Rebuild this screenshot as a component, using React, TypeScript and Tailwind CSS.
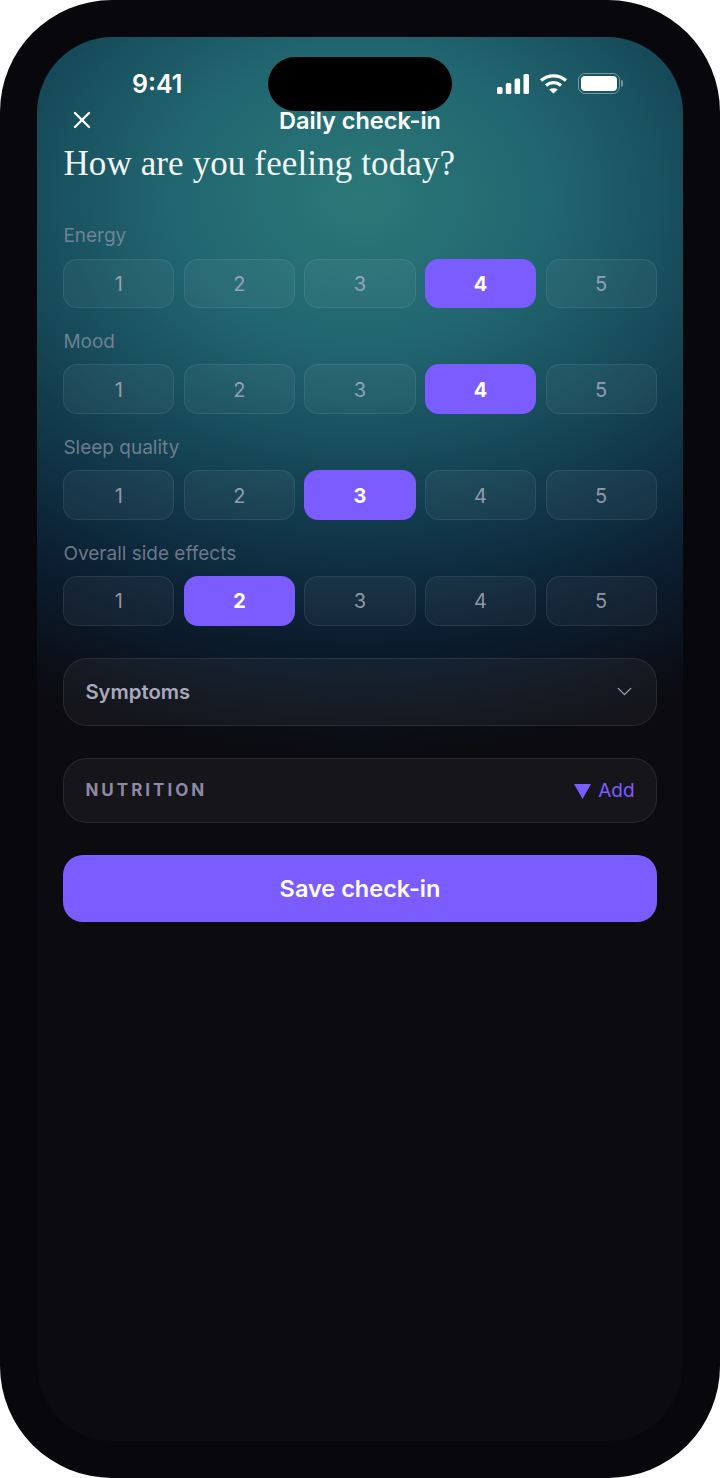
import React from 'react'
import { ChevronDown, X } from 'lucide-react'

type Scale = { label: string; active: number }

const SCALES: Scale[] = [
  { label: 'Energy', active: 4 },
  { label: 'Mood', active: 4 },
  { label: 'Sleep quality', active: 3 },
  { label: 'Overall side effects', active: 2 },
]

function StatusIcons() {
  return (
    <div className="flex items-center gap-[10px]">
      {/* signal */}
      <svg width="32" height="20" viewBox="0 0 32 20" fill="white">
        <rect x="0" y="13" width="5.5" height="7" rx="1.5" />
        <rect x="8.8" y="9" width="5.5" height="11" rx="1.5" />
        <rect x="17.6" y="4.5" width="5.5" height="15.5" rx="1.5" />
        <rect x="26.5" y="0" width="5.5" height="20" rx="1.5" />
      </svg>
      {/* wifi */}
      <svg width="29" height="21" viewBox="0 0 29 21" fill="none" stroke="white" strokeWidth="3.2">
        <path d="M2 7.5C9 1.2 20 1.2 27 7.5" />
        <path d="M7 12.5C11.5 8.7 17.5 8.7 22 12.5" />
        <path d="M14.5 20.5L10.2 16.6C12.8 14.7 16.2 14.7 18.8 16.6Z" fill="white" stroke="none" />
      </svg>
      {/* battery */}
      <div className="flex items-center gap-[1px]">
        <div className="w-[42px] h-[21px] rounded-[7px] border border-white/40 p-[2px]">
          <div className="w-full h-full rounded-[4px] bg-white" />
        </div>
        <div className="w-[2px] h-[7px] rounded-r-full bg-white/40" />
      </div>
    </div>
  )
}

function ScaleRow({ label, active }: Scale) {
  return (
    <div>
      <div className="h-[24px] text-[19px] leading-[26px] text-[#8d93a3]/75">{label}</div>
      <div className="mt-[11.5px] grid grid-cols-5 gap-[9.5px]">
        {[1, 2, 3, 4, 5].map((n) =>
          n === active ? (
            <button
              key={n}
              className="h-[49.5px] rounded-[14px] bg-[#7b5cff] pt-[1px] text-[20px] font-bold text-white"
            >
              {n}
            </button>
          ) : (
            <button
              key={n}
              className="h-[49.5px] rounded-[14px] border border-white/[0.08] bg-white/[0.045] pt-[1px] text-[20px] text-[#b0b4c4]/80"
            >
              {n}
            </button>
          )
        )}
      </div>
    </div>
  )
}

export default function App() {
  return (
    <div className="w-[720px] h-[1478px] bg-white font-['Inter',sans-serif]">
      <div className="h-full rounded-[112px] bg-[#08080c] p-[37px]">
        <div className="relative h-full overflow-hidden rounded-[76px] bg-[#0b0b10] bg-[radial-gradient(ellipse_720px_560px_at_323px_160px,#2b7878_0%,#216670_26%,#174c5b_46%,#103448_62%,#0b1e30_78%,#0b0f18_94%,#0b0b10_100%)]">
          {/* camera island */}
          <div className="absolute left-[231px] top-[20px] w-[184px] h-[54px] rounded-full bg-black" />

          {/* status bar */}
          <div className="flex h-[63px] items-end justify-between pl-[95px] pr-[60px]">
            <span className="text-[25px] leading-[32px] font-semibold text-white">9:41</span>
            <div className="pb-[6px]">
              <StatusIcons />
            </div>
          </div>

          {/* nav */}
          <div className="relative flex h-[40px] items-center justify-center pt-[1px]">
            <X className="absolute left-[30.5px] top-[6px] text-white" size={28} strokeWidth={2} />
            <span className="text-[23.5px] font-semibold text-white">Daily check-in</span>
          </div>

          <div className="px-[26.4px]">
            <h1 className="h-[48px] font-['Liberation_Serif',serif] text-[35px] leading-[48px] tracking-[0.12px] text-[#f2f5f5]">
              How are you feeling today?
            </h1>

            <div className="mt-[35.2px] flex flex-col gap-[20.8px]">
              {SCALES.map((s) => (
                <ScaleRow key={s.label} {...s} />
              ))}
            </div>

            <div className="mt-[32px] flex h-[68px] items-center justify-between rounded-[24px] border border-white/[0.08] bg-white/[0.045] pl-[21px] pr-[19px]">
              <span className="pt-[1px] text-[20.3px] font-semibold text-[#a9a9bd]">Symptoms</span>
              <ChevronDown size={25} strokeWidth={1.3} className="text-[#a0a0b0]" />
            </div>

            <div className="mt-[32px] flex h-[65px] items-center justify-between rounded-[24px] border border-white/[0.08] bg-white/[0.045] pl-[21px] pr-[21px]">
              <span className="pt-[2px] text-[17px] font-bold tracking-[3px] text-[#8d8aa5]">NUTRITION</span>
              <div className="flex items-center gap-[7px] pt-[2px] text-[#7b5cff]">
                <svg width="17" height="15" viewBox="0 0 17 15" fill="currentColor">
                  <path d="M0 0H17L8.5 15Z" />
                </svg>
                <span className="text-[19px]">Add</span>
              </div>
            </div>

            <button className="mt-[32.5px] h-[67px] w-full rounded-[20px] bg-[#7b5cff] pt-[1px] text-[23.5px] font-semibold text-white">
              Save check-in
            </button>
          </div>
        </div>
      </div>
    </div>
  )
}
